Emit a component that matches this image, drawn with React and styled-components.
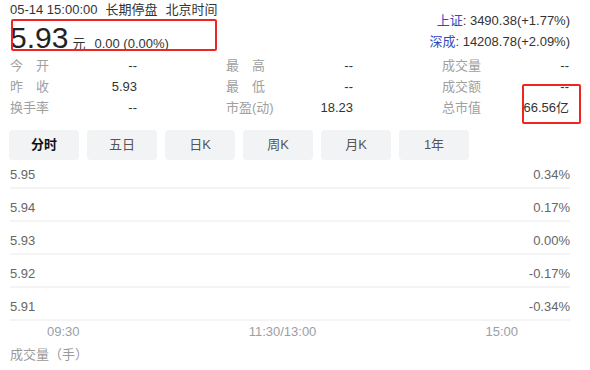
import React from 'react'
import styled, { createGlobalStyle } from 'styled-components'

const GlobalStyle = createGlobalStyle`
  body {
    margin: 0;
    background: #fff;
    font-family: "Liberation Sans", Arial, "Noto Sans CJK SC", sans-serif;
    color: #333;
  }
`

const stats = [
  [
    { label: '今\u3000开', value: '--' },
    { label: '最\u3000高', value: '--' },
    { label: '成交量', value: '--' },
  ],
  [
    { label: '昨\u3000收', value: '5.93' },
    { label: '最\u3000低', value: '--' },
    { label: '成交额', value: '--' },
  ],
  [
    { label: '换手率', value: '--' },
    { label: '市盈(动)', value: '18.23' },
    { label: '总市值', value: '66.56亿' },
  ],
]

const tabs = ['分时', '五日', '日K', '周K', '月K', '1年']

const priceRows = [
  { price: '5.95', pct: '0.34%' },
  { price: '5.94', pct: '0.17%' },
  { price: '5.93', pct: '0.00%' },
  { price: '5.92', pct: '-0.17%' },
  { price: '5.91', pct: '-0.34%' },
]

const App = () => {
  return (
    <>
      <GlobalStyle />
      <Page>
        <Header>
          <QuoteBox>
            <TimeLine>
              <span>05-14 15:00:00</span>
              <span>长期停盘</span>
              <span>北京时间</span>
            </TimeLine>
            <PriceRow>
              <Price>5.93</Price>
              <Unit>元</Unit>
              <Change>0.00 (0.00%)</Change>
            </PriceRow>
          </QuoteBox>

          <IndexBox>
            <IndexLine>
              <IndexName>上证</IndexName>: 3490.38(+1.77%)
            </IndexLine>
            <IndexLine>
              <IndexName>深成</IndexName>: 14208.78(+2.09%)
            </IndexLine>
          </IndexBox>
        </Header>

        <StatsGrid>
          {stats.flat().map((item, index) => (
            <Stat key={index}>
              <StatLabel>{item.label}</StatLabel>
              <StatValue>{item.value}</StatValue>
            </Stat>
          ))}
        </StatsGrid>

        <Tabs>
          {tabs.map((tab, index) => (
            <Tab key={tab} $active={index === 0}>
              {tab}
            </Tab>
          ))}
        </Tabs>

        <Chart>
          {priceRows.map((row, index) => (
            <GridRow key={row.price} $first={index === 0}>
              <AxisLabel>{row.price}</AxisLabel>
              <AxisLabel>{row.pct}</AxisLabel>
            </GridRow>
          ))}
          <TimeAxis>
            <span>09:30</span>
            <span>11:30/13:00</span>
            <span>15:00</span>
          </TimeAxis>
        </Chart>

        <VolumeTitle>成交量（手）</VolumeTitle>

        <Marker style={{ left: 11, top: 19, width: 206, height: 32 }} />
        <Marker style={{ left: 522, top: 84, width: 59, height: 40 }} />
      </Page>
    </>
  )
}

export default App

const Page = styled.div`
  position: relative;
  width: 590px;
  height: 370px;
  box-sizing: border-box;
  padding: 0 20px 0 10px;
  overflow: hidden;
`

const Header = styled.header`
  display: flex;
  justify-content: space-between;
  height: 55px;
`

const QuoteBox = styled.div`
  display: flex;
  flex-direction: column;
`

const TimeLine = styled.div`
  display: flex;
  gap: 8px;
  font-size: 13px;
  line-height: 20px;
  color: #333;
`

const PriceRow = styled.div`
  display: flex;
  align-items: baseline;
  line-height: 35px;
`

const Price = styled.span`
  font-size: 30px;
  color: #222;
`

const Unit = styled.span`
  font-size: 13px;
  margin-left: 4px;
  color: #333;
`

const Change = styled.span`
  font-size: 13px;
  margin-left: 9px;
  color: #333;
`

const IndexBox = styled.div`
  padding-top: 10px;
  text-align: right;
`

const IndexLine = styled.div`
  font-size: 13px;
  line-height: 21px;
  color: #333;
`

const IndexName = styled.span`
  color: #3349c0;
`

const StatsGrid = styled.section`
  display: grid;
  grid-template-columns: repeat(3, 127px);
  column-gap: 89px;
`

const Stat = styled.div`
  display: flex;
  justify-content: space-between;
  font-size: 13px;
  line-height: 21px;
`

const StatLabel = styled.span`
  color: #a0a0a0;
`

const StatValue = styled.span`
  color: #333;
`

const Tabs = styled.nav`
  display: flex;
  gap: 8px;
  margin-top: 12px;
  margin-left: -1px;
`

const Tab = styled.div`
  width: 70px;
  height: 30px;
  line-height: 30px;
  text-align: center;
  border-radius: 4px;
  background: #f2f3f5;
  font-size: 13px;
  font-weight: ${({ $active }) => ($active ? 700 : 400)};
  color: ${({ $active }) => ($active ? '#111' : '#555')};
`

const Chart = styled.section`
  width: 560px;
`

const GridRow = styled.div`
  box-sizing: border-box;
  display: flex;
  justify-content: space-between;
  align-items: flex-end;
  height: ${({ $first }) => ($first ? '29px' : '33px')};
  padding-bottom: 4px;
  border-bottom: 2px solid #f4f4f5;
`

const AxisLabel = styled.span`
  font-size: 13px;
  line-height: 16px;
  color: #666;
`

const TimeAxis = styled.div`
  display: flex;
  justify-content: space-between;
  padding: 1px 52px 0 37px;
  font-size: 13px;
  line-height: 20px;
  color: #9a9ea6;
`

const VolumeTitle = styled.div`
  margin-top: 3px;
  font-size: 13px;
  line-height: 20px;
  color: #9a9a9a;
`

const Marker = styled.div`
  position: absolute;
  box-sizing: border-box;
  border: 2px solid #ee2520;
  border-radius: 2px;
  pointer-events: none;
`
